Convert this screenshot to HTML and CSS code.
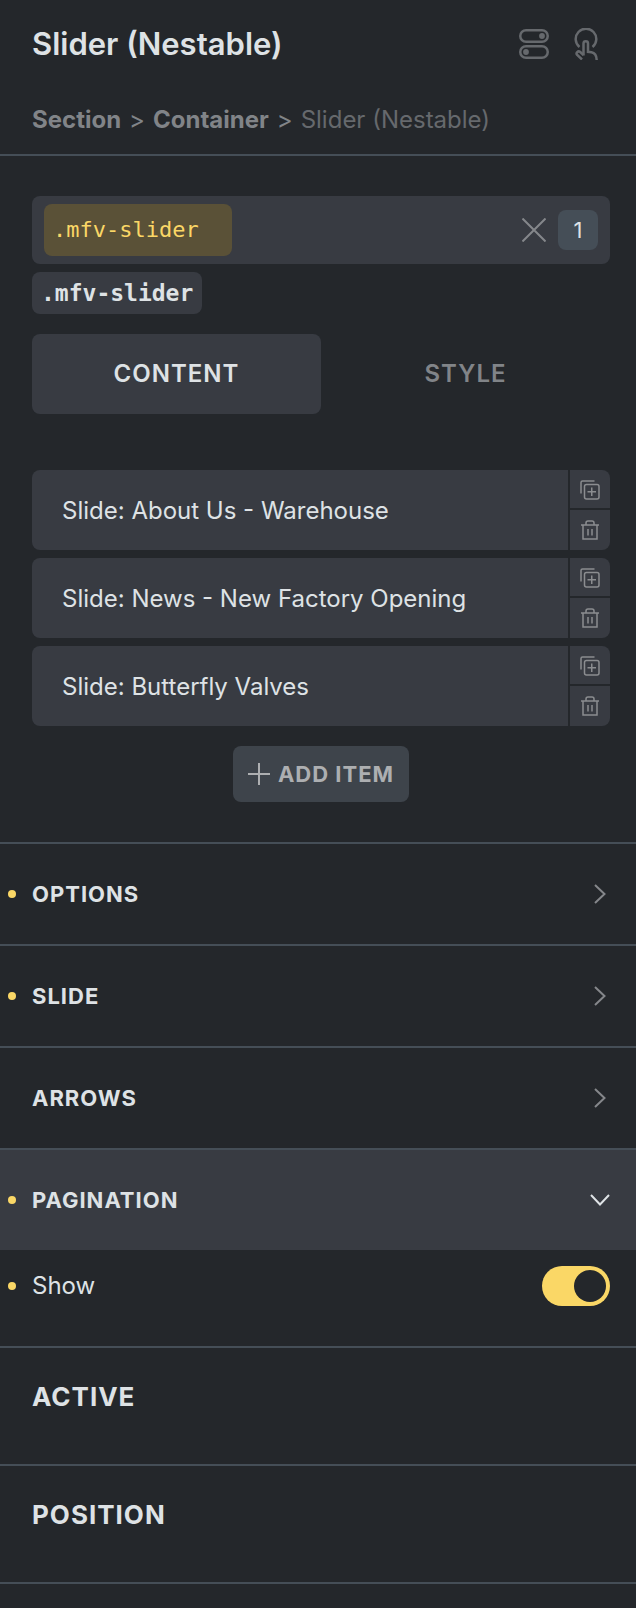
FILE: index.html
```html
<!DOCTYPE html>
<html lang="en">
<head>
    <meta charset="UTF-8">
    <meta name="viewport" content="width=device-width, initial-scale=1.0">
    <title>Slider (Nestable)</title>
    <link rel="stylesheet" href="styles.css">
</head>
<body>
    <!-- Shared icons -->
    <svg class="sprite" aria-hidden="true">
        <symbol id="icon-copy" viewBox="0 0 20 20">
            <path d="M1 13.5V2.5Q1 1 2.500 1H14.500M6.500 4.500H17Q19 4.500 19 6.500V17Q19 19 17 19H6.500Q4.500 19 4.500 17V6.500Q4.500 4.500 6.500 4.500ZM11.750 7.500V16M7.500 11.750H16"/>
        </symbol>
        <symbol id="icon-trash" viewBox="0 0 20 20">
            <path d="M1 5H19M3 5V19H17V5M6 5V3Q6 1 8 1H12Q14 1 14 3V5M8 9V15.500M12 9V15.500"/>
        </symbol>
        <symbol id="icon-chevron" viewBox="0 0 12 20">
            <path d="M1 1L10.500 10L1 19"/>
        </symbol>
    </svg>

    <header class="header">
        <div class="title-row">
            <h1>Slider (Nestable)</h1>
            <div class="header-actions">
                <button type="button" class="icon-btn" aria-label="Conditions">
                    <svg width="30" height="32" viewBox="0 0 30 32">
                        <rect x="1.250" y="2.250" width="27.500" height="11.500" rx="5.750"/>
                        <rect x="1.250" y="18.250" width="27.500" height="11.500" rx="5.750"/>
                        <circle class="fill" cx="23" cy="8" r="2.900"/>
                        <circle class="fill" cx="7" cy="24" r="2.900"/>
                    </svg>
                </button>
                <button type="button" class="icon-btn" aria-label="Interactions">
                    <svg width="24" height="32" viewBox="0 0 24 32">
                        <path d="M5.500 19A10.300 10.300 0 1 1 18.500 19"/>
                        <path d="M9.500 27.500V15.500Q9.500 13.300 11.750 13.300T14 15.500V23.800L17.500 24.200Q22.500 25 22.700 32"/>
                        <path d="M9.500 27L6 23.800Q4.500 22.800 3 24.300Q2 25.500 3.200 27L8 31.500"/>
                    </svg>
                </button>
            </div>
        </div>
        <nav class="breadcrumb">
            <a href="#">Section</a><span>&gt;</span><a href="#">Container</a><span>&gt;</span><span class="current">Slider (Nestable)</span>
        </nav>
    </header>

    <main>
        <div class="content">
            <div class="selector">
                <button type="button" class="active-class">.mfv-slider</button>
                <button type="button" class="clear" aria-label="Clear">
                    <svg width="24" height="24" viewBox="0 0 24 24"><path d="M0.500 0.500L23.500 23.500M23.500 0.500L0.500 23.500"/></svg>
                </button>
                <button type="button" class="count">1</button>
            </div>
            <button type="button" class="class-chip">.mfv-slider</button>

            <div class="tabs">
                <button type="button" class="tab active">Content</button>
                <button type="button" class="tab">Style</button>
            </div>

            <ul class="slides">
                <li class="slide">
                    <button type="button" class="slide-title">Slide: About Us - Warehouse</button>
                    <button type="button" class="slide-action copy" aria-label="Duplicate"><svg><use href="#icon-copy"/></svg></button>
                    <button type="button" class="slide-action delete" aria-label="Delete"><svg><use href="#icon-trash"/></svg></button>
                </li>
                <li class="slide">
                    <button type="button" class="slide-title">Slide: News - New Factory Opening</button>
                    <button type="button" class="slide-action copy" aria-label="Duplicate"><svg><use href="#icon-copy"/></svg></button>
                    <button type="button" class="slide-action delete" aria-label="Delete"><svg><use href="#icon-trash"/></svg></button>
                </li>
                <li class="slide">
                    <button type="button" class="slide-title">Slide: Butterfly Valves</button>
                    <button type="button" class="slide-action copy" aria-label="Duplicate"><svg><use href="#icon-copy"/></svg></button>
                    <button type="button" class="slide-action delete" aria-label="Delete"><svg><use href="#icon-trash"/></svg></button>
                </li>
            </ul>

            <button type="button" class="add-item">
                <svg width="22" height="22" viewBox="0 0 22 22"><path d="M11 0V22M0 11H22"/></svg>
                Add item
            </button>
        </div>

        <button type="button" class="group modified">Options <svg class="chevron"><use href="#icon-chevron"/></svg></button>
        <button type="button" class="group modified">Slide <svg class="chevron"><use href="#icon-chevron"/></svg></button>
        <button type="button" class="group">Arrows <svg class="chevron"><use href="#icon-chevron"/></svg></button>
        <button type="button" class="group modified open">Pagination <svg class="chevron"><use href="#icon-chevron"/></svg></button>

        <div class="control modified">
            <label for="show">Show</label>
            <input type="checkbox" id="show" class="toggle" checked>
        </div>

        <h2 class="separator">Active</h2>
        <h2 class="separator">Position</h2>
        <div class="divider"></div>
    </main>
</body>
</html>
```
FILE: styles.css
```css
* {
    box-sizing: border-box;
}
body {
    margin: 0;
    background-color: #24272b;
    color: #dee2e5;
    font-family: Inter, sans-serif;
    font-size: 24px;
    line-height: 32px;
}
button {
    display: flex;
    align-items: center;
    justify-content: center;
    margin: 0;
    padding: 0;
    border: none;
    border-radius: 8px;
    background: none;
    color: inherit;
    font: inherit;
    cursor: pointer;
}
svg {
    display: block;
    flex: none;
    fill: none;
    stroke: currentColor;
    stroke-width: 2;
}
.sprite {
    position: absolute;
    width: 0;
    height: 0;
}

/* Header */
.header {
    padding: 28px 26px 18px 32px;
    border-bottom: 2px solid #454e57;
}
.title-row {
    display: flex;
    align-items: center;
    justify-content: space-between;
    margin-bottom: 44px;
}
h1 {
    margin: 0;
    font-size: 31px;
    font-weight: 600;
    line-height: 32px;
}
.header-actions {
    display: flex;
    gap: 25px;
    padding-right: 12px;
}
.icon-btn {
    border-radius: 0;
    color: #66696d;
}
.icon-btn svg {
    stroke-width: 2.5;
}
.icon-btn .fill {
    fill: currentColor;
    stroke: none;
}
.breadcrumb {
    display: flex;
    gap: 8px;
    color: #818488;
}
.breadcrumb a {
    color: inherit;
    font-weight: 700;
    text-decoration: none;
}
.breadcrumb .current {
    color: #66696d;
}

/* Classes */
.content {
    padding: 40px 26px 40px 32px;
}
.selector {
    display: flex;
    align-items: center;
    gap: 12px;
    padding: 8px 12px;
    border-radius: 8px;
    background-color: #383b42;
}
.active-class {
    justify-content: flex-start;
    width: 188px;
    height: 52px;
    padding: 0 9px;
    background-color: #5a5137;
    color: #fad766;
    font-family: "DejaVu Sans Mono", monospace;
    font-size: 22px;
}
.clear {
    margin-left: auto;
    color: #85878b;
}
.count {
    width: 40px;
    height: 40px;
    background-color: #454e57;
    font-size: 22px;
}
.class-chip {
    height: 42px;
    margin-top: 8px;
    padding: 0 9px;
    background-color: #383b42;
    font-family: "DejaVu Sans Mono", monospace;
    font-size: 23px;
    font-weight: 700;
}

/* Tabs */
.tabs {
    display: flex;
    margin: 20px 0 56px;
}
.tab {
    flex: 1;
    height: 80px;
    color: #818488;
    font-weight: 600;
    letter-spacing: 1px;
    text-transform: uppercase;
}
.tab.active {
    background-color: #383b42;
    color: #dee2e5;
}

/* Slides */
.slides {
    display: grid;
    gap: 8px;
    margin: 0;
    padding: 0;
    list-style: none;
}
.slide {
    display: grid;
    grid-template-columns: 1fr 40px;
    grid-template-rows: 38px 40px;
    gap: 2px;
}
.slide-title {
    grid-row: span 2;
    justify-content: flex-start;
    padding: 2px 30px 0;
    border-radius: 8px 0 0 8px;
    background-color: #383b42;
}
.slide-action {
    background-color: #383b42;
    color: #8b8d90;
}
.slide-action svg {
    width: 20px;
    height: 20px;
    stroke-width: 1.5;
}
.copy {
    padding-top: 2px;
    border-radius: 0 8px 0 0;
}
.delete {
    border-radius: 0 0 8px 0;
}
.add-item {
    gap: 8px;
    height: 56px;
    margin: 20px auto 0;
    padding: 0 15px;
    background-color: #3e444b;
    color: #adafb1;
    font-size: 22px;
    font-weight: 700;
    letter-spacing: 1px;
    text-transform: uppercase;
}

/* Control groups */
.group {
    position: relative;
    justify-content: space-between;
    width: 100%;
    height: 102px;
    padding: 0 26px 0 32px;
    border-top: 2px solid #454e57;
    border-radius: 0;
    font-size: 22px;
    font-weight: 700;
    letter-spacing: 1px;
    text-transform: uppercase;
}
.group.open {
    background-color: #383b42;
}
.chevron {
    width: 12px;
    height: 20px;
    margin-right: 4px;
    color: #85878b;
}
.open .chevron {
    color: #dee2e5;
    transform: rotate(90deg);
}
/* Dot next to changed settings */
.modified::before {
    content: "";
    position: absolute;
    left: 8px;
    top: calc(50% - 4px);
    width: 8px;
    height: 8px;
    border-radius: 50%;
    background-color: #fad766;
}
.control {
    position: relative;
    display: flex;
    align-items: center;
    justify-content: space-between;
    margin: 16px 0 40px;
    padding: 0 26px 0 32px;
}
.toggle {
    appearance: none;
    width: 68px;
    height: 40px;
    margin: 0;
    padding: 4px;
    border-radius: 20px;
    background-color: #454e57;
    cursor: pointer;
}
.toggle::before {
    content: "";
    display: block;
    width: 32px;
    height: 32px;
    border-radius: 50%;
    background-color: #24272b;
}
.toggle:checked {
    background-color: #fad766;
}
.toggle:checked::before {
    margin-left: auto;
}
.separator {
    margin: 0;
    padding: 33px 32px 51px;
    border-top: 2px solid #454e57;
    font-size: 26px;
    font-weight: 700;
    letter-spacing: 1px;
    text-transform: uppercase;
}
.divider {
    border-top: 2px solid #454e57;
}
```
